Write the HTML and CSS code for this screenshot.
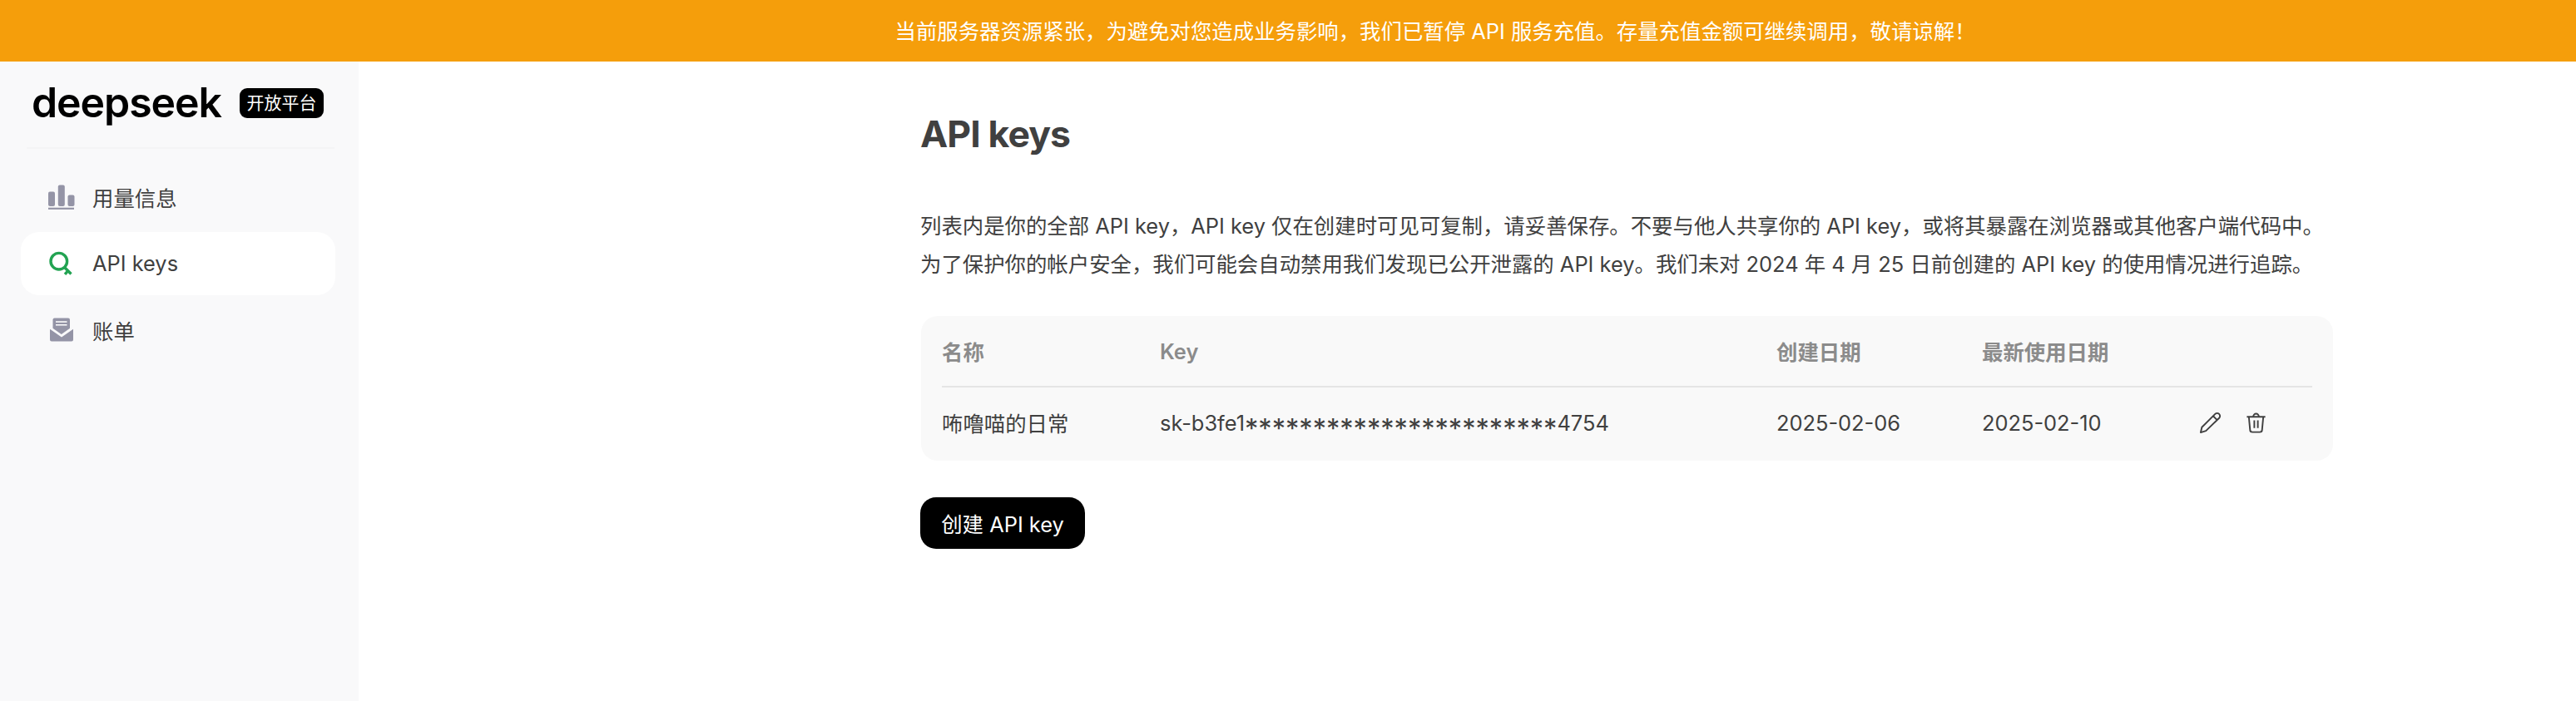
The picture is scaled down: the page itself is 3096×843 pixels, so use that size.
FILE: index.html
```
<!DOCTYPE html>
<html lang="zh-CN">
<head>
  <meta charset="UTF-8">
  <title>DeepSeek 开放平台</title>
  <link rel="stylesheet" href="styles.css">
</head>
<body>
  <div class="notice">当前服务器资源紧张，为避免对您造成业务影响，我们已暂停 API 服务充值。存量充值金额可继续调用，敬请谅解！</div>

  <div class="layout">
    <aside class="sidebar">
      <div class="brand">
        <span class="logo">deepseek</span>
        <span class="badge">开放平台</span>
      </div>
      <nav class="menu">
        <a class="menu-item">
          <svg class="menu-icon" viewBox="0 0 32 32" fill="#9494a6">
            <rect x="1" y="9.5" width="8" height="17.5" rx="2"/>
            <rect x="12.8" y="1.5" width="8" height="25.5" rx="2"/>
            <rect x="24.5" y="13.5" width="8" height="13.5" rx="2"/>
            <rect x="1" y="28.7" width="31" height="2.2"/>
          </svg>
          <span>用量信息</span>
        </a>
        <a class="menu-item active">
          <svg class="menu-icon" viewBox="0 0 32 32" fill="none" stroke="#22a352" stroke-width="3.4">
            <circle cx="13.8" cy="13.2" r="9.8"/>
            <path d="M20.3 20.3L28.500 28.500M24.8 24.6L21 28.8"/>
          </svg>
          <span>API keys</span>
        </a>
        <a class="menu-item">
          <svg class="menu-icon" viewBox="0 0 32 32">
            <path fill="#9494a6" d="M8.500 1.500h16.500a2 2 0 0 1 2 2v10.300l-10.200 7.200l-10.300-7.200V3.500a2 2 0 0 1 2-2z"/>
            <path fill="#9494a6" d="M3 14.800l14 9.700l14-9.700V27.500a2 2 0 0 1-2 2H5a2 2 0 0 1-2-2z"/>
            <path stroke="#fff" stroke-width="1.600" d="M10 6h13.500M10 9.800h13.500"/>
          </svg>
          <span>账单</span>
        </a>
      </nav>
    </aside>

    <main class="content">
      <h1 class="title">API keys</h1>
      <p class="desc">列表内是你的全部 API key，API key 仅在创建时可见可复制，请妥善保存。不要与他人共享你的 API key，或将其暴露在浏览器或其他客户端代码中。<br>为了保护你的帐户安全，我们可能会自动禁用我们发现已公开泄露的 API key。我们未对 2024 年 4 月 25 日前创建的 API key 的使用情况进行追踪。</p>

      <div class="card">
        <div class="row head">
          <span>名称</span>
          <span>Key</span>
          <span>创建日期</span>
          <span>最新使用日期</span>
          <span></span>
        </div>
        <div class="row">
          <span>咘噜喵的日常</span>
          <span>sk-b3fe1<span class="mask">***********************</span>4754</span>
          <span>2025-02-06</span>
          <span>2025-02-10</span>
          <span class="actions">
            <svg class="action-icon" viewBox="0 0 28 28" fill="none" stroke="#404040" stroke-width="2" stroke-linejoin="round">
              <path d="M2 26l1.500-6.500L20 3a3.500 3.500 0 0 1 5 5L8.500 24zM17.500 5.500l5 5"/>
            </svg>
            <svg class="action-icon" viewBox="0 0 28 28" fill="none" stroke="#404040" stroke-width="2">
              <path d="M2.500 6.500h23M10.500 6.500a3.500 4 0 0 1 7 0M5 6.500l1.500 16a3 3 0 0 0 3 3h9a3 3 0 0 0 3-3l1.500-16M11.800 11v9.500M16.200 11v9.500"/>
            </svg>
          </span>
        </div>
      </div>

      <button class="create-btn">创建 API key</button>
    </main>
  </div>
</body>
</html>
```
FILE: styles.css
```
* {
  box-sizing: border-box;
}
body {
  margin: 0;
  height: 843px;
  display: flex;
  flex-direction: column;
  background: #fff;
  color: #404040;
  font-family: Inter, "Noto Sans CJK SC", sans-serif;
  font-size: 25.4px;
}

/* 顶部公告 */
.notice {
  height: 74px;
  line-height: 76px;
  padding-left: 1075.5px;
  background: #f59e0b;
  color: #fff;
  white-space: nowrap;
}

.layout {
  flex: 1;
  display: flex;
}

/* 左侧导航 */
.sidebar {
  width: 431px;
  padding: 0 28px 0 25px;
  background: #f9f9fa;
}
.brand {
  height: 105px;
  margin: 0 1px 0 7px;
  padding: 0 13px 5px 6px;
  display: flex;
  align-items: center;
  justify-content: space-between;
  border-bottom: 2px solid #f4f4f5;
}
.logo {
  color: #000;
  font-size: 50px;
  font-weight: 600;
  line-height: 60px;
  letter-spacing: -1.1px;
}
.badge {
  width: 101px;
  height: 36px;
  margin-top: 1px;
  border-radius: 9px;
  background: #000;
  color: #fff;
  font-size: 21px;
  line-height: 35px;
  text-align: center;
}
.menu {
  display: flex;
  flex-direction: column;
  gap: 4px;
  margin-top: 20px;
}
.menu-item {
  height: 76px;
  padding-left: 32px;
  display: flex;
  align-items: center;
  gap: 22px;
  border-radius: 22px;
}
.menu-item.active {
  background: #fff;
}
.menu-item span {
  padding-bottom: 1px;
}
.menu-icon {
  width: 32px;
  height: 32px;
  overflow: visible;
}

/* 主内容 */
.content {
  padding: 59px 0 0 676px;
}
.title {
  margin: 0 0 0 -1px;
  font-size: 44.5px;
  font-weight: 650;
  line-height: 56px;
  letter-spacing: -0.9px;
}
.desc {
  margin: 60px 0 0 -1px;
  line-height: 45.7px;
  white-space: nowrap;
}
.card {
  width: 1697px;
  margin-top: 40px;
  padding: 0 25px;
  border-radius: 20px;
  background: #f9f9f9;
}
.row {
  height: 88px;
  padding-bottom: 4px;
  display: grid;
  grid-template-columns: 262px 741px 247px 261px 1fr;
  align-items: center;
}
.row.head {
  height: 86px;
  padding-bottom: 0;
  border-bottom: 2px solid #e5e5e5;
  color: #8b8b8b;
  font-weight: 600;
}
/* 星号放大并下移，与数字垂直居中 */
.mask {
  font-size: 32.6px;
  line-height: 0;
  vertical-align: -9px;
}
.actions {
  display: flex;
  gap: 28px;
}
.action-icon {
  width: 27px;
  height: 27px;
}
.create-btn {
  width: 198px;
  height: 62px;
  margin: 44px 0 0 -1px;
  padding: 0 0 1px;
  border: none;
  border-radius: 19px;
  background: #000;
  color: #fff;
  font: inherit;
}
```
